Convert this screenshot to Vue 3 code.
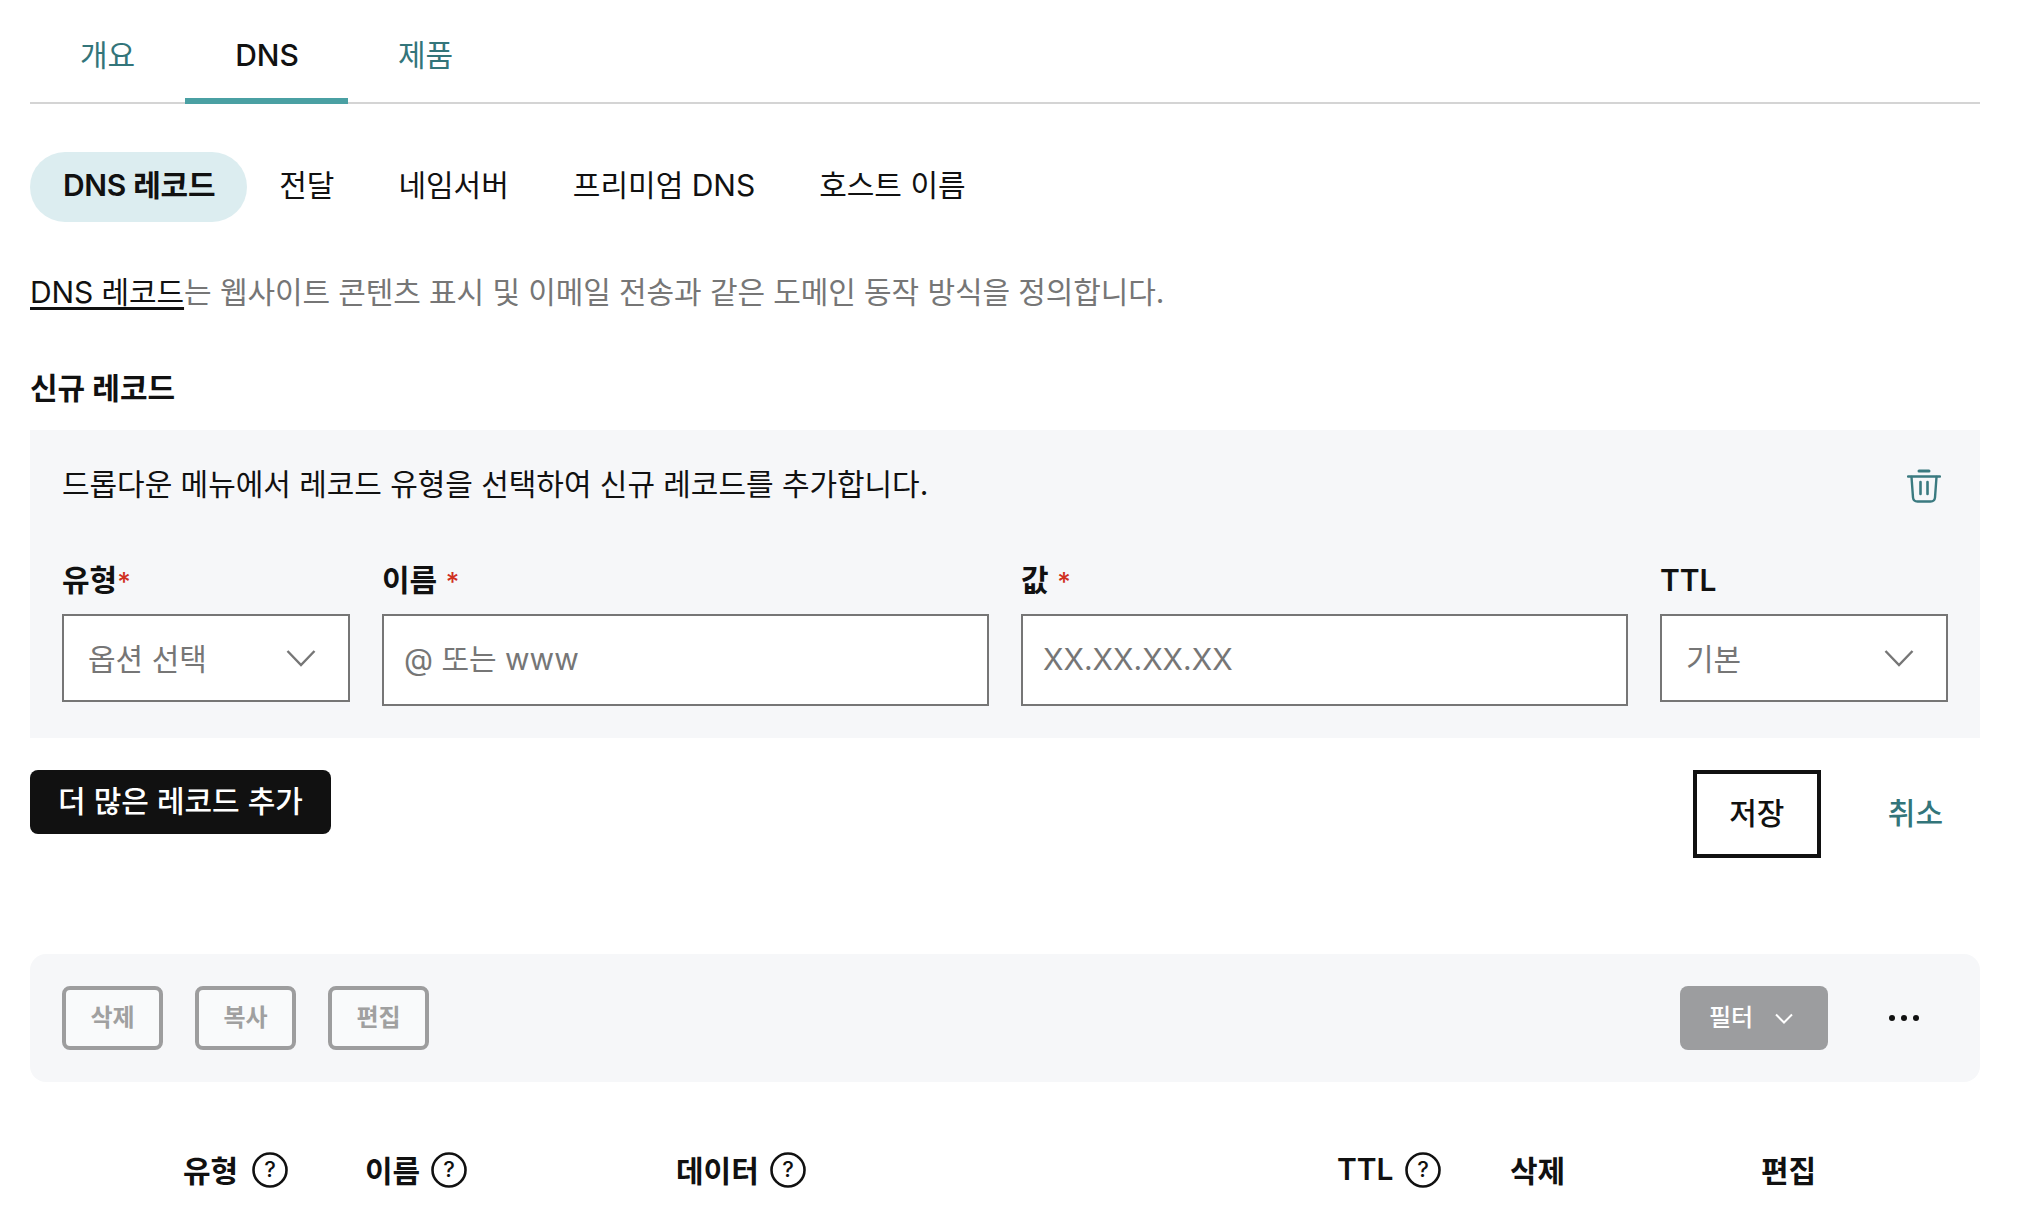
<script setup>
const tabs = ['개요', 'DNS', '제품']
const subTabs = ['DNS 레코드', '전달', '네임서버', '프리미엄 DNS', '호스트 이름']
const actions = ['삭제', '복사', '편집']
const columns = [
  { label: '유형', help: true },
  { label: '이름', help: true },
  { label: '데이터', help: true },
  { label: 'TTL', help: true },
  { label: '삭제', help: false },
  { label: '편집', help: false },
]
</script>

<template>
  <div class="page">
    <nav class="tabs">
      <a v-for="tab in tabs" :key="tab" class="tab" :class="{ active: tab === 'DNS' }">{{ tab }}</a>
    </nav>

    <div class="subtabs">
      <a v-for="(item, index) in subTabs" :key="item" class="subtab" :class="{ active: index === 0 }">{{ item }}</a>
    </div>

    <p class="intro"><a class="intro-link">DNS 레코드</a>는 웹사이트 콘텐츠 표시 및 이메일 전송과 같은 도메인 동작 방식을 정의합니다.</p>

    <h2 class="section-title">신규 레코드</h2>

    <section class="panel">
      <div class="panel-head">
        <p class="panel-text">드롭다운 메뉴에서 레코드 유형을 선택하여 신규 레코드를 추가합니다.</p>
        <svg class="trash" width="34" height="34" viewBox="0 0 34 34" fill="none" stroke="#3a7a80" stroke-linecap="round">
          <path d="M12 2H22" stroke-width="3" />
          <path d="M1 7.5H33" stroke-width="2.4" />
          <path d="M4.5 8L6 28.5Q6.4 32.5 10.5 32.5H23.5Q27.6 32.5 28 28.5L29.5 8" stroke-width="2.4" />
          <path d="M13.5 13V25M20.5 13V25" stroke-width="2.6" />
        </svg>
      </div>

      <div class="fields">
        <div class="field">
          <label class="label">유형<span class="req">*</span></label>
          <div class="select">
            <span>옵션 선택</span>
            <svg width="30" height="18" viewBox="0 0 30 18" fill="none" stroke="#767676" stroke-width="2.4"><path d="M1.5 2L15 16L28.5 2" /></svg>
          </div>
        </div>
        <div class="field">
          <label class="label">이름 <span class="req spaced">*</span></label>
          <input class="input" placeholder="@ 또는 www" />
        </div>
        <div class="field">
          <label class="label">값 <span class="req spaced">*</span></label>
          <input class="input" placeholder="XX.XX.XX.XX" />
        </div>
        <div class="field">
          <label class="label">TTL</label>
          <div class="select">
            <span>기본</span>
            <svg width="30" height="18" viewBox="0 0 30 18" fill="none" stroke="#767676" stroke-width="2.4"><path d="M1.5 2L15 16L28.5 2" /></svg>
          </div>
        </div>
      </div>
    </section>

    <div class="form-actions">
      <button class="btn-add">더 많은 레코드 추가</button>
      <div class="form-actions-right">
        <button class="btn-save">저장</button>
        <a class="cancel">취소</a>
      </div>
    </div>

    <div class="toolbar">
      <div class="toolbar-left">
        <button v-for="action in actions" :key="action" class="btn-disabled">{{ action }}</button>
      </div>
      <div class="toolbar-right">
        <button class="btn-filter">
          필터
          <svg width="18" height="11" viewBox="0 0 18 11" fill="none" stroke="#fff" stroke-width="2"><path d="M1 1.5L9 9.5L17 1.5" /></svg>
        </button>
        <span class="dots"><i></i><i></i><i></i></span>
      </div>
    </div>

    <div class="table-head">
      <div v-for="col in columns" :key="col.label" class="th">
        <span class="th-label">{{ col.label }}</span>
        <svg v-if="col.help" width="36" height="36" viewBox="0 0 36 36" fill="none">
          <circle cx="18" cy="18" r="16.5" stroke="#111" stroke-width="2.6" />
          <text x="18" y="25" text-anchor="middle" class="qmark">?</text>
        </svg>
      </div>
    </div>
  </div>
</template>

<style>
html,
body {
  background: #fff;
}
</style>

<style scoped>
.page {
  width: 2026px;
  height: 1214px;
  overflow: hidden;
  box-sizing: border-box;
  padding: 0 46px 0 30px;
  background: #fff;
  color: #111;
  font-family: Inter, "Noto Sans CJK KR", sans-serif;
  font-size: 30px;
}
.tabs {
  display: flex;
  height: 104px;
  border-bottom: 2px solid #d4d4d4;
  box-sizing: border-box;
}
.tab {
  height: 104px;
  box-sizing: border-box;
  padding: 34px 50px 0;
  line-height: 42px;
  color: #33757a;
  border-bottom: 6px solid transparent;
}
.tab.active {
  padding-right: 49px;
  color: #111;
  font-weight: 500;
  border-bottom-color: #4aa0a3;
}
.subtabs {
  display: flex;
  margin-top: 48px;
}
.subtab {
  height: 70px;
  line-height: 66px;
  padding: 0 32px;
  border-radius: 35px;
}
.subtab.active {
  padding-left: 33px;
  letter-spacing: -0.3px;
  background: #dcedf0;
  font-weight: 600;
}
.intro {
  margin: 50px 0 0;
  line-height: 40px;
  letter-spacing: -0.1px;
  color: #767676;
}
.intro-link {
  color: #111;
  text-decoration: underline;
  text-underline-offset: 4px;
}
.section-title {
  margin: 56px 0 0;
  font-size: 30px;
  line-height: 40px;
  font-weight: 700;
}
.panel {
  margin-top: 22px;
  height: 308px;
  box-sizing: border-box;
  padding: 32px 32px 0;
  background: #f6f7f9;
}
.panel-head {
  display: flex;
  justify-content: space-between;
}
.panel-text {
  margin: 1px 0 1px;
  line-height: 42px;
  letter-spacing: -0.05px;
}
.trash {
  margin: 7px 7px 0 0;
}
.fields {
  display: grid;
  grid-template-columns: 288px 1fr 1fr 288px;
  column-gap: 32px;
  margin-top: 54px;
}
.label {
  display: block;
  height: 40px;
  font-weight: 600;
  line-height: 40px;
  margin-bottom: 14px;
}
.req {
  color: #d0301f;
  font-size: 26px;
  font-weight: 500;
}
.req.spaced {
  margin-left: 1px;
}
.select {
  display: flex;
  align-items: center;
  justify-content: space-between;
  height: 88px;
  box-sizing: border-box;
  padding: 0 32px 0 24px;
  border: 2px solid #767676;
  background: #fff;
  color: #767676;
}
.select span {
  margin-top: -2px;
}
.input {
  display: block;
  width: 100%;
  height: 92px;
  box-sizing: border-box;
  padding: 0 20px 2px;
  border: 2px solid #767676;
  border-radius: 0;
  background: #fff;
  font: inherit;
  color: #111;
  outline: none;
}
.input::placeholder {
  color: #767676;
  opacity: 1;
}
.form-actions {
  display: flex;
  justify-content: space-between;
  align-items: flex-start;
  margin-top: 32px;
}
.btn-add {
  height: 64px;
  width: 301px;
  padding: 0 0 6px;
  border: none;
  border-radius: 8px;
  background: #111;
  color: #fff;
  font: inherit;
  font-weight: 500;
}
.form-actions-right {
  display: flex;
  align-items: center;
  gap: 67px;
  padding-right: 37px;
}
.btn-save {
  width: 128px;
  height: 88px;
  padding: 0 0 6px;
  border: 4px solid #111;
  border-radius: 0;
  background: #fff;
  color: #111;
  font: inherit;
  font-weight: 500;
}
.cancel {
  color: #33757a;
  font-weight: 500;
  margin-top: -6px;
}
.toolbar {
  display: flex;
  justify-content: space-between;
  align-items: center;
  height: 128px;
  margin-top: 96px;
  box-sizing: border-box;
  padding: 0 61px 0 32px;
  background: #f6f7f9;
  border-radius: 16px;
}
.toolbar-left {
  display: flex;
  gap: 32px;
}
.toolbar-right {
  display: flex;
  align-items: center;
  gap: 61px;
}
.btn-disabled {
  width: 101px;
  height: 64px;
  padding: 0 0 6px;
  border: 4px solid #9d9d9e;
  border-radius: 8px;
  background: #f9fafb;
  color: #a0a0a0;
  font: inherit;
  font-size: 24px;
  font-weight: 600;
}
.btn-filter {
  display: flex;
  align-items: center;
  justify-content: center;
  gap: 22px;
  width: 148px;
  height: 64px;
  padding: 0 6px 6px 0;
  border: none;
  border-radius: 8px;
  background: #9c9d9f;
  color: #fff;
  font: inherit;
  font-size: 24px;
  font-weight: 500;
}
.btn-filter svg {
  margin-top: 6px;
}
.dots {
  display: flex;
  gap: 6px;
}
.dots i {
  width: 6px;
  height: 6px;
  border-radius: 50%;
  background: #111;
}
.table-head {
  display: grid;
  grid-template-columns: 182px 311px 661px 173px 251px 1fr;
  margin-top: 70px;
  padding-left: 153px;
}
.th {
  display: flex;
  align-items: center;
  gap: 11px;
  height: 36px;
  font-weight: 600;
}
.th:first-child {
  gap: 14px;
}
.th-label {
  margin-top: -2px;
}
.qmark {
  font-size: 22px;
  font-weight: 500;
  fill: #111;
}
</style>
